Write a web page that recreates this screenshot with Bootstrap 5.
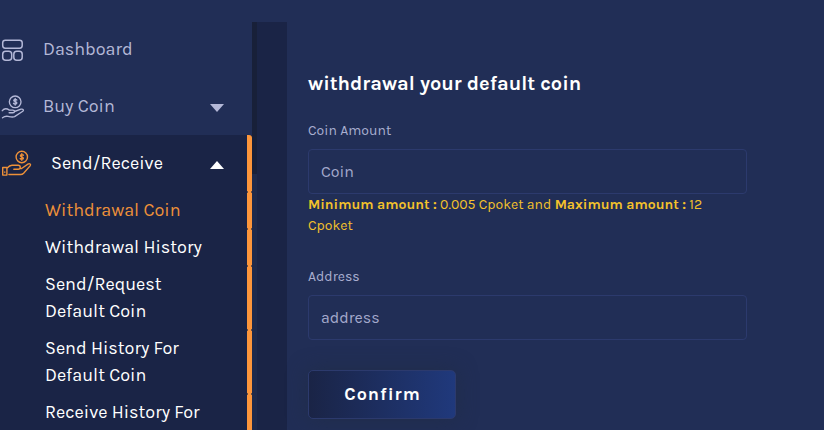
<!DOCTYPE html>
<html lang="en">
<head>
<meta charset="utf-8">
<meta name="viewport" content="width=device-width, initial-scale=1">
<title>Withdrawal Coin</title>
<link href="https://cdn.jsdelivr.net/npm/bootstrap@5.3.0/dist/css/bootstrap.min.css" rel="stylesheet">
<style>
body{background:#212e56;color:#b4b8d7;font-family:Karla,Roboto,"Liberation Sans",sans-serif;height:430px}
.page-top{height:22px}
.app-shell{height:408px}
.side{width:252px;height:409px;margin-top:-1px;font-size:18px;line-height:27px}
.side-link{height:57px;color:#b4b8d7}
.side-link svg{display:block;flex:none}
.side-icon{width:43px;padding-left:1px}
.side-group .side-icon{width:51px}
.caret-icon{margin-right:28px;margin-top:3px}
.side-group .caret-icon{margin-right:23px}
.side-group{background:#1a2446}
.bar-item{border-right:5px solid #fd963b;position:relative}
.bar-item:not(:last-child)::after{content:"";position:absolute;z-index:1;right:-5px;bottom:-1px;width:5px;height:2px;border:solid #72503e;border-width:0 1px}
.bar-item:first-child{border-top-right-radius:3px}
.sub-link{padding:5px 30px 5px 45px;color:#fff}
.sub-link.current{color:#ee9139}
.sub-link:last-child{padding-bottom:4px}
.track{width:5px;background:#1e2a4c}
.thumb{height:152px;background:#182039}
.gutter{width:30px;background:#1a2446}
.content-pane{padding:50px 77px 0 21px;font-size:14px;line-height:21px}
.pane-title{font-size:20px;line-height:24px;color:#fff;margin-bottom:24px}
.field-label{font-size:14px;line-height:21px;margin-bottom:8px;color:#a9aed0}
.form-control.dark-input{height:45px;background:transparent;border:1px solid #2c3a6d;border-radius:4px;padding:0 12px;font-size:16px;color:#fff}
.dark-input::placeholder{color:#a4a9cc;opacity:1}
.limits{color:#f4c22b;height:42px;margin-bottom:30px}
.limits b{font-weight:700}
.btn.confirm-btn{width:148px;height:49px;margin-top:30px;border:1px solid #2c3a6d;border-radius:5px;background:linear-gradient(90deg,#1a2446,#20397c);box-shadow:0 0 20px rgba(32,45,70,.8);color:#fff;font-size:18px;font-weight:700;letter-spacing:1px;padding:0 0 0 1px}
</style>
<script src="https://cdn.jsdelivr.net/npm/bootstrap@5.3.0/dist/js/bootstrap.bundle.min.js"></script>
</head>
<body class="overflow-hidden">
<header class="page-top"></header>
<div class="app-shell d-flex">
  <nav class="side flex-shrink-0">
    <a href="#" class="side-link d-flex align-items-center text-decoration-none">
      <span class="side-icon"><svg width="22" height="22" viewBox="0 0 22 22" fill="none" stroke="currentColor" stroke-width="1.5"><rect x="1.7" y="1.2" width="19.5" height="8" rx="2.6"/><rect x="1.7" y="12.2" width="9" height="9" rx="3"/><rect x="12.8" y="12.2" width="8.4" height="9" rx="3"/></svg></span>
      <span>Dashboard</span>
    </a>
    <a href="#" class="side-link d-flex align-items-center text-decoration-none">
      <span class="side-icon"><svg width="24" height="25" viewBox="0 0 23 24" fill="none" stroke="currentColor" stroke-width="1.3" stroke-linecap="round" stroke-linejoin="round"><circle cx="13.6" cy="7.5" r="5.6"/><path d="M15.2 5.8c-.5-.7-2.9-.8-3 .4 0 1.5 3 .9 3 2.4-.1 1.3-2.6 1.2-3.2.3M13.6 4.3v6.3"/><path d="M1.2 16c1.8-2.2 4.6-2 6.8-.5h3.4c2 0 2 2.5 0 2.5H7.8M12.9 16.8l6.3-2.2c2-.5 3 .8 1.7 2L13 21.7c-2 .9-4.2.2-6.1-.2-2-.4-3.8 0-5.5 1.3"/></svg></span>
      <span>Buy Coin</span>
      <svg class="caret-icon ms-auto" width="14" height="8" viewBox="0 0 14 8"><path d="M0 0h14L7 8z" fill="currentColor"/></svg>
    </a>
    <div class="side-group">
      <a href="#" class="bar-item side-link text-white d-flex align-items-center text-decoration-none">
        <span class="side-icon"><svg width="31" height="27" viewBox="0 0 31 27" fill="none" stroke="#ee9139" stroke-width="1.4" stroke-linejoin="round" stroke-linecap="round"><circle cx="20.8" cy="7" r="5.7"/><path d="M22.4 5.2c-.5-.7-3-.8-3 .5s3 .9 3 2.5c0 1.3-2.6 1.2-3.2.3M20.8 3.7v6.6"/><path d="M1.7 17.5h4.2v7.6H1.7zM3.8 22v.3M5.9 18.2c2-2.2 3.2-3 5.1-3h6.2c2.7 0 2.7 4.1 0 4.1h-4.4M18.8 18.5h1.8l6.3-4.4c1.8-1.2 3.4.3 2.2 1.8l-6.5 7.3c-1 1-1.8 1.3-3 1.3H7.9"/></svg></span>
        <span>Send/Receive</span>
        <svg class="caret-icon ms-auto" width="14" height="8" viewBox="0 0 14 8"><path d="M0 8h14L7 0z" fill="currentColor"/></svg>
      </a>
      <a href="#" class="bar-item sub-link current d-block text-decoration-none">Withdrawal Coin</a>
      <a href="#" class="bar-item sub-link d-block text-decoration-none">Withdrawal History</a>
      <a href="#" class="bar-item sub-link d-block text-decoration-none">Send/Request<br>Default Coin</a>
      <a href="#" class="bar-item sub-link d-block text-decoration-none">Send History For<br>Default Coin</a>
      <a href="#" class="bar-item sub-link d-block text-decoration-none">Receive History For</a>
    </div>
  </nav>
  <div class="track flex-shrink-0"><div class="thumb"></div></div>
  <div class="gutter flex-shrink-0"></div>
  <main class="content-pane flex-grow-1">
    <h4 class="pane-title fw-bold">withdrawal your default coin</h4>
    <form>
      <label class="field-label d-block" for="amount">Coin Amount</label>
      <input class="form-control dark-input" id="amount" placeholder="Coin">
      <p class="limits"><b>Minimum amount :</b> 0.005 Cpoket and <b>Maximum amount :</b> 12<br>Cpoket</p>
      <label class="field-label d-block" for="address">Address</label>
      <input class="form-control dark-input" id="address" placeholder="address">
      <button type="button" class="btn confirm-btn">Confirm</button>
    </form>
  </main>
</div>
</body>
</html>
